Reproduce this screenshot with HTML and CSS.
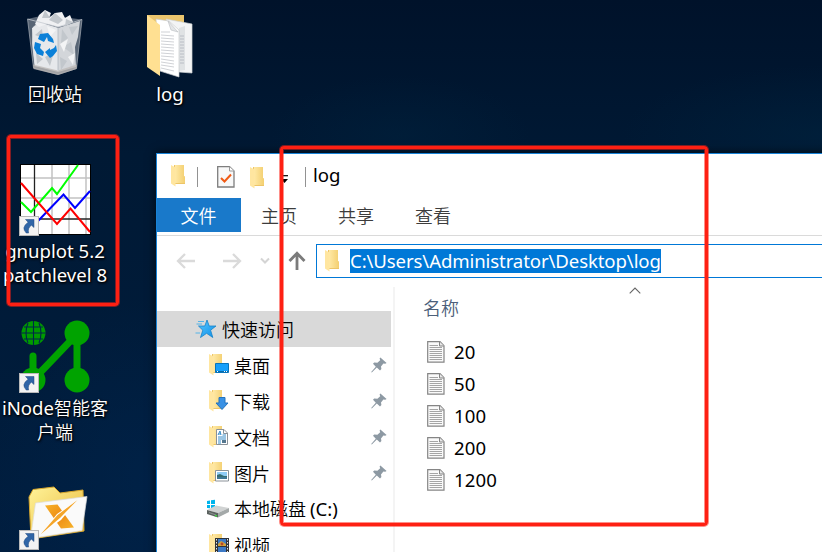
FILE: index.html
```html
<!DOCTYPE html>
<html lang="zh-CN">
<head>
<meta charset="utf-8">
<title>log</title>
<link rel="stylesheet" href="styles.css">
</head>
<body>
<svg class="defs" width="0" height="0" aria-hidden="true">
  <defs>
    <linearGradient id="fold" x1="0" x2="1"><stop offset="0" stop-color="#ffe9a6"/><stop offset="1" stop-color="#f3cf70"/></linearGradient>
    <linearGradient id="star" x1="0" x2="1" y2="1"><stop offset="0" stop-color="#5cc8ff"/><stop offset="1" stop-color="#0a8ee8"/></linearGradient>
    <linearGradient id="xfold" x1="0" x2="1" y2="1"><stop offset="0" stop-color="#fff39a"/><stop offset="1" stop-color="#e8b634"/></linearGradient>
    <linearGradient id="xmark" x1="0" x2="1" y2="1"><stop offset="0" stop-color="#f7b32a"/><stop offset=".5" stop-color="#ee8c14"/><stop offset="1" stop-color="#f7b32a"/></linearGradient>
    <symbol id="folder" viewBox="0 0 16 23">
      <path d="M4 1H14V12L15 13V20H4Z" fill="#edc568"/>
      <path d="M5 1H14V12L15 13V19H5Z" fill="url(#fold)"/>
      <path d="M1 1L5.5 3.5V22.5L1 19.5Z" fill="#ffe6a0"/>
    </symbol>
    <symbol id="arrow" viewBox="0 0 20 20">
      <rect x=".5" y=".5" width="19" height="19" fill="#f3f3f3" stroke="#b9b9b9"/>
      <path d="M6.5 3.5H15V11.5L12.4 9.2Q8.5 12 9.6 17H7.2Q1.8 11.5 9.1 6.2Z" fill="#2f65a7" stroke="#20497e" stroke-width=".5"/>
    </symbol>
    <symbol id="pin" viewBox="0 0 16 16">
      <path d="M9.4.4L15.6 6L14.2 6.8L12.4 6.6L10 9.4L10.4 12L9 13.4L5.8 10.6L.8 15.6L.2 15L4.8 9.8L2 6.8L3.2 5.6L6.4 5.7L9.2 3.2L8.6 1.4Z" fill="#8d99a3"/>
    </symbol>
    <symbol id="textfile" viewBox="0 0 18 22">
      <path d="M.7.7H13L17 4.7V21.2H.7Z" fill="#fafafa" stroke="#858585" stroke-width="1.2"/>
      <path d="M12.5.7V5H17" fill="#e8e8e8" stroke="#858585"/>
      <path d="M2.5 4.5H11M2.5 6.5H15M2.5 8.5H15M2.5 10.5H15M2.5 12.5H15M2.5 14.5H15M2.5 16.5H15M2.5 18.5H15" stroke="#a5a5a5"/>
    </symbol>
  </defs>
</svg>

<main class="desktop">
  <figure class="shortcut bin">
    <svg width="60" height="68" viewBox="0 0 60 68">
      <path d="M2.5 10L20 6L57 10.5L51.5 59.5L33 65.5L8.5 59Z" fill="#6f7b88" opacity=".8"/>
      <path d="M8 18L14 13L33 19L55 12L53 28L50 38L51 58L33 63L9.5 57L7 34Z" fill="#d3d6da"/>
      <path d="M7 19L16 14L33 19V62L10 57L8 40Z" fill="#e6e8eb"/>
      <path d="M10 15L14 6L20 1L26 4L24 9L30 4L37 3L40 9L45 6L48 13L42 16L33 18L22 15L14 18Z" fill="#f0f1f3"/>
      <path d="M20 1L17 9L25 9ZM30 4L24 11L33 15L38 11ZM41 10L48 13L40 17ZM10 26L17 20L18 29ZM20 48L29 43L25 57ZM11 44L18 50L12 55ZM37 20L43 29L36 34ZM44 18L53 17L47 26ZM38 38L46 33L49 46ZM35 48L42 52L36 61Z" fill="#c2c7cc"/>
      <path d="M35 35L43 30L39 43ZM43 48L50 44L48 56ZM22 17L31 21L25 28Z" fill="#f3f4f5"/>
      <path d="M2.5 10L33 18L57 10.5" fill="none" stroke="#c5cad0" stroke-width=".8"/>
      <path d="M2.5 10L8.5 59L33 65.5L51.5 59.5L57 10.5M33 18V61" fill="none" stroke="#a8afb7" stroke-width=".7"/>
      <path d="M8 55.500L33 61.500L52 55.500L51.500 60L33 66L8.500 60Z" fill="#bcb8b6" opacity=".75"/>
      <path d="M14 26L22 25L27 31L28 35L22 33L21 29L18 34L12 31ZM9 34L15 36L14 40L18 44L17 48L11 46L8 40ZM19 44L24 40V42L28 40L30 37L31 43L27 48L24 50Z" transform="translate(1 -1)" fill="#0b80d8"/>
    </svg>
    <figcaption>回收站</figcaption>
  </figure>

  <figure class="shortcut log-folder">
    <svg width="50" height="64" viewBox="0 0 50 64">
      <path d="M1 1H38V50H1Z" fill="#eac56e"/>
      <path d="M20 5L46 10V59L33 58Z" fill="#f3f4f5" stroke="#cfd2d4" stroke-width=".7"/>
      <path d="M33 14L39 12V56L33 57Z" fill="#dfe2e4"/>
      <path d="M34 22H38M34 25H38M34 28H38M34 31H38M34 34H38M34 37H38M34 40H38M34 43H38M34 46H38M34 49H38" stroke="#aeb5bc" stroke-width=".8"/>
      <path d="M10 5L23 7L33 16V63L14 57Z" fill="#fff" stroke="#c8cbcd" stroke-width=".7"/>
      <path d="M22 7L25 16L32 18Z" fill="#e4e6e8" stroke="#b8bcc0" stroke-width=".6"/>
      <path d="M15 18L24 18M15 21L28 22M15 24L28 25M15 27L28 28M15 30L28 31M15 33L28 34M15 36L28 37M15 39L28 40M15 42L28 43M15 45L28 47M15 48L28 50M15 51L28 53M15 54L28 57" stroke="#c9ccd0" stroke-width=".9"/>
      <path d="M1 1L14 11V62L1 53Z" fill="#ffe092"/>
    </svg>
    <figcaption class="latin">log</figcaption>
  </figure>

  <figure class="shortcut gnuplot">
    <div class="picture">
      <svg width="71" height="71" viewBox="0 0 71 71">
        <rect x=".5" y=".5" width="70" height="70" fill="#fff" stroke="#000"/>
        <path d="M32 1V70M49 1V70M66 1V70M1 14H70M1 34H70" stroke="#c2c2c2" stroke-width="1.5"/>
        <path d="M14.5 1V70M1 55H70" stroke="#222" stroke-width="1.3"/>
        <path d="M1 38L11 48L32 24L37 30L58 1" fill="none" stroke="#0f0" stroke-width="2"/>
        <path d="M18 57L43.5 30.5L55 44L70 27" fill="none" stroke="#00f" stroke-width="2"/>
        <path d="M1 19L37 60L50.5 44.5L70 68" fill="none" stroke="#f00" stroke-width="2"/>
      </svg>
      <svg class="link-mark" width="20" height="20"><use href="#arrow"/></svg>
    </div>
    <figcaption class="latin">gnuplot 5.2<br>patchlevel 8</figcaption>
  </figure>

  <figure class="shortcut inode">
    <div class="picture">
      <svg width="71" height="73" viewBox="0 0 71 73">
        <circle cx="13.5" cy="13" r="12" fill="#009a00"/>
        <path d="M13.5 1V25M1.5 13H25.5M4 7H23M4 19H23M8 3Q4 13 8 23M19 3Q23 13 19 23" fill="none" stroke="#00264a" stroke-width="1.1"/>
        <path d="M13 60V36M13 60L57 14M57 14V60" stroke="#00a300" stroke-width="7" stroke-linecap="round"/>
        <circle cx="57" cy="13" r="12.5" fill="#00a300"/><circle cx="57" cy="60" r="12.5" fill="#00a300"/><circle cx="13" cy="60" r="12.5" fill="#00a300"/>
      </svg>
      <svg class="link-mark" width="20" height="20"><use href="#arrow"/></svg>
    </div>
    <figcaption><span class="latin">iNode</span>智能客<br>户端</figcaption>
  </figure>

  <figure class="shortcut xfolder">
    <div class="picture">
      <svg width="71" height="64" viewBox="0 0 71 64">
        <path d="M9 11L13 3.500L34 1L40 7L63 4L64 45L11 53Z" fill="url(#xfold)" stroke="#d7a62c"/>
        <path d="M15.500 17L67 10.500L62 44.500L10.500 52.500Z" fill="#fafafa" stroke="#ddd" stroke-width=".7"/>
        <path d="M25 19.500L37.500 18.500L54 41.500L41 42.500Z" fill="url(#xmark)"/>
        <path d="M57.500 14L41 34L20.500 48.500L37 28Z" fill="#fff"/>
        <path d="M57.500 14L40.500 31.500L20.500 48.500L37.500 29Z" fill="#f4a52a"/>
      </svg>
      <svg class="link-mark" width="20" height="20"><use href="#arrow"/></svg>
    </div>
  </figure>

  <section class="window">
    <header class="titlebar">
      <svg class="app-icon" width="16" height="23"><use href="#folder"/></svg>
      <i class="rule"></i>
      <svg class="check-icon" width="18" height="22" viewBox="0 0 18 22"><path d="M.7.7H12.5L17 5V21H.7Z" fill="#f8f8f8" stroke="#7e7e7e" stroke-width="1.3"/><path d="M12.5.7V5H17" fill="#fff" stroke="#999"/><path d="M4 12L7.5 15.5L14 8.5" fill="none" stroke="#f05a14" stroke-width="2"/></svg>
      <svg class="new-icon" width="16" height="23"><use href="#folder"/></svg>
      <svg class="more-icon" width="9" height="9" viewBox="0 0 9 9"><path d="M1 .7H8" stroke="#000" stroke-width="1.2"/><path d="M1 4H8L4.5 8Z"/></svg>
      <i class="rule"></i>
      <h1 class="latin">log</h1>
    </header>
    <nav class="tabs">
      <span class="file-tab">文件</span><span>主页</span><span>共享</span><span>查看</span>
    </nav>
    <div class="address-row">
      <svg width="20" height="18" viewBox="0 0 20 18"><path d="M19 9H2M9 2L2 9L9 16" fill="none" stroke="#dadada" stroke-width="2.3"/></svg>
      <svg width="20" height="18" viewBox="0 0 20 18"><path d="M1 9H18M11 2L18 9L11 16" fill="none" stroke="#dadada" stroke-width="2.3"/></svg>
      <svg width="10" height="8" viewBox="0 0 10 8"><path d="M1 1.5L5 5.5L9 1.5" fill="none" stroke="#d4d4d4" stroke-width="2"/></svg>
      <svg width="18" height="20" viewBox="0 0 18 20"><path d="M9 19V3M1.5 10L9 2.2L16.5 10" fill="none" stroke="#7b7b7b" stroke-width="2.8"/></svg>
      <div class="address"><svg width="16" height="23"><use href="#folder"/></svg><span class="selection latin">C:\Users\Administrator\Desktop\log</span></div>
    </div>
    <div class="content">
      <aside>
        <div class="place quick"><svg width="22" height="20" viewBox="0 0 22 20"><path d="M12 1L14.2 7H21L15.6 11.2L17.8 18.5L11.6 14.3L5.5 18.5L7.8 11.2L3.5 7H9.8Z" fill="url(#star)" stroke="#1683c9" stroke-width=".8"/><path d="M3 2.5H9M1.5 5H7M.5 14H5" stroke="#55b4e8"/></svg><span>快速访问</span></div>
        <div class="place"><svg width="22" height="24" viewBox="0 0 22 24"><use href="#folder" width="16" height="23"/><path d="M7.5 10.5H20.5V19.5H7.5Z" fill="#18a0fb" stroke="#0875bc"/><path d="M8 18.5H20" stroke="#076aa8"/><path d="M9 18.5H10M16 18.5H17M18 18.5H19" stroke="#fff"/></svg><span>桌面</span><svg class="pin" width="16" height="16"><use href="#pin"/></svg></div>
        <div class="place"><svg width="22" height="24" viewBox="0 0 22 24"><use href="#folder" width="16" height="23"/><path d="M11 8.5H17V14H20L14 20.5L8 14H11Z" fill="#3991e5" stroke="#2473bd"/></svg><span>下载</span><svg class="pin" width="16" height="16"><use href="#pin"/></svg></div>
        <div class="place"><svg width="22" height="24" viewBox="0 0 22 24"><use href="#folder" width="16" height="23"/><path d="M8.5 4.5H16L19.5 8V19.5H8.5Z" fill="#fff" stroke="#8b9299"/><path d="M15.5 4.5V8.5H19.5" fill="none" stroke="#8b9299"/><path d="M10 10L12 6L13 10M10.5 9H13M14.5 10H18M10 12H18M10 14H18M10 16H13M10 18H13" fill="none" stroke="#388dc9"/><path d="M14 15H18V18H14Z" fill="#55778f"/></svg><span>文档</span><svg class="pin" width="16" height="16"><use href="#pin"/></svg></div>
        <div class="place"><svg width="22" height="24" viewBox="0 0 22 24"><use href="#folder" width="16" height="23"/><path d="M7.5 9.5H20.5V20H7.5Z" fill="#fff" stroke="#8b9299"/><path d="M9 11H19V18H9Z" fill="#8fccf6"/><path d="M9 14L12 13L16 15H19V18H9Z" fill="#366c72"/><path d="M9 17H19" stroke="#4682b9"/></svg><span>图片</span><svg class="pin" width="16" height="16"><use href="#pin"/></svg></div>
        <div class="place drive"><svg width="24" height="20" viewBox="0 0 24 20"><path d="M1 2L4 1.5V5H1ZM5 1.3L9 .7V5H5ZM1 6H4V9.3L1 9ZM5 6H9V10L5 9.5Z" fill="#00b4ec"/><path d="M1 11L10 6.5L23 9L12 14Z" fill="#d1d3d3"/><path d="M1 11L12 14V18.5L1 15Z" fill="#5b625f"/><path d="M12 14L23 9V13L12 18.5Z" fill="#a4a9a9"/><path d="M3 13.5L10 16" stroke="#8b9290"/><path d="M9 16.5L11 17" stroke="#3dd23d" stroke-width="1.5"/></svg><span>本地磁盘 <span class="latin">(C:)</span></span></div>
        <div class="place"><svg width="22" height="24" viewBox="0 0 22 24"><use href="#folder" width="16" height="23"/><path d="M7 5H21V23H7Z" fill="#303338"/><path d="M10 6H18V13H10ZM10 14H18V22H10Z" fill="#3c79c5"/><path d="M10 11L13 8L15 9L18 11V13H10Z" fill="#d2a23b"/><path d="M8.5 6V23M19.5 6V23" stroke="#e5e5e5" stroke-dasharray="1.5 1.5"/><circle cx="14" cy="11" r="1.4" fill="#b64529"/></svg><span>视频</span></div>
      </aside>
      <div class="files">
        <div class="column-head"><span>名称</span><svg width="12" height="7" viewBox="0 0 12 7"><path d="M.7 6.3L6 1L11.3 6.3" fill="none" stroke="#666" stroke-width="1.1"/></svg></div>
        <ul class="latin">
          <li><svg width="18" height="22"><use href="#textfile"/></svg>20</li>
          <li><svg width="18" height="22"><use href="#textfile"/></svg>50</li>
          <li><svg width="18" height="22"><use href="#textfile"/></svg>100</li>
          <li><svg width="18" height="22"><use href="#textfile"/></svg>200</li>
          <li><svg width="18" height="22"><use href="#textfile"/></svg>1200</li>
        </ul>
      </div>
    </div>
  </section>
  <div class="marker marker-shortcut"></div>
  <div class="marker marker-window"></div>
</main>
</body>
</html>
```
FILE: styles.css
```css
* { box-sizing: border-box; }
body { margin: 0; overflow: hidden; font: 350 18px/24px "Noto Sans CJK SC", sans-serif; color: #000; }
svg { display: block; flex: none; }
.defs { position: absolute; }
.latin { font-family: "Noto Sans", sans-serif; font-size: 18.6px; font-weight: 400; }
.desktop {
  position: relative; width: 822px; height: 552px; overflow: hidden;
  background:
    radial-gradient(ellipse 130px 60px at 400px 135px, rgba(0,38,66,.35), transparent),
    radial-gradient(ellipse 200px 70px at 822px 135px, rgba(0,40,68,.4), transparent),
    radial-gradient(ellipse 160px 180px at 150px 480px, rgba(0,40,84,.4), transparent),
    linear-gradient(#00122a, #001934 28%, #001e40);
}

/* Desktop shortcuts */
.shortcut { position: absolute; width: 116px; margin: 0; display: flex; flex-direction: column; align-items: center; color: #fff; text-align: center; white-space: nowrap; text-shadow: 1px 1px 2px #000, 0 1px 3px #000; }
.bin { left: -3px; top: 9px; gap: 4px; }
.log-folder { left: 112px; top: 14px; gap: 4px; }
.log-folder svg { margin-left: 2px; }
.gnuplot { left: -3px; top: 164px; gap: 4px; }
.inode { left: -3px; top: 320px; gap: 2px; }
.inode figcaption { line-height: 24px; }
.inode .latin { line-height: 20px; }
.xfolder { left: -3px; top: 486px; }
.picture { position: relative; }
.link-mark { position: absolute; left: -1px; bottom: -1px; }
.inode .link-mark { bottom: 0; }
.xfolder .link-mark { bottom: 0; }

/* Explorer window */
.window { position: absolute; left: 156px; top: 153px; width: 680px; height: 420px; background: #fff; border: 1px solid #1883d7; box-shadow: 0 0 9px rgba(0,0,0,.7); }
.titlebar { height: 44px; display: flex; align-items: center; padding-left: 13px; }
.rule { width: 1px; height: 20px; background: #929292; margin-top: 2px; }
.app-icon { margin: -2px 11px 0 0; }
.check-icon { margin: 2px 14px 0 19px; }
.new-icon { margin-top: 2px; }
.more-icon { margin: 6px 16px 0 15px; }
.titlebar h1 { margin: -2px 0 0 7px; font-weight: 400; }
.tabs { height: 38px; display: flex; border-bottom: 1px solid #dadada; color: #3c3c3c; }
.tabs span { width: 77px; height: 34px; line-height: 34px; text-align: center; padding-right: 1px; }
.tabs .file-tab { width: 84px; background: #1979ca; color: #fff; }
.address-row { height: 49px; margin-bottom: 2px; padding-left: 19px; display: flex; align-items: center; }
.address-row > svg + svg { margin-left: 26px; }
.address-row > svg:nth-child(3) { margin-left: 18px; }
.address-row > svg:nth-child(4) { margin-left: 18px; }
.address { flex: 1; height: 34px; margin-left: 10px; border: 1px solid #0078d7; display: flex; align-items: center; padding-left: 7px; }
.selection { height: 24px; margin-left: 10px; background: #0078d7; color: #fff; letter-spacing: -.11px; }
.content { display: flex; height: 275px; }
aside { width: 236px; padding-top: 24px; }
.place { display: flex; align-items: center; width: 234px; height: 36px; padding: 0 4px 0 51px; gap: 4px; white-space: nowrap; }
.place > span { margin-top: -1px; }
.quick { background: #d9d9d9; padding-left: 38px; gap: 5px; }
.drive { padding-left: 49px; gap: 4px; }
.pin { margin-left: auto; }
.files { flex: 1; border-left: 2px solid #f4f4f4; padding-left: 28px; }
.column-head { display: flex; height: 49px; color: #4c607a; }
.column-head span { padding-top: 8px; }
.column-head svg { margin: 0 0 0 170px; }
.files ul { list-style: none; margin: 0; padding: 0 0 0 4px; }
.files li { display: flex; align-items: center; gap: 9px; height: 32px; letter-spacing: .1px; }

/* Red outlines over the desktop */
.marker { position: absolute; border: 3px solid #fe2013; border-radius: 4px; box-shadow: 0 0 0 1px rgba(254,32,19,.5), inset 0 0 0 1px rgba(254,32,19,.5); }
.marker-shortcut { left: 7px; top: 135px; width: 112px; height: 171px; }
.marker-window { left: 280px; top: 146px; width: 428px; height: 380px; }
```
